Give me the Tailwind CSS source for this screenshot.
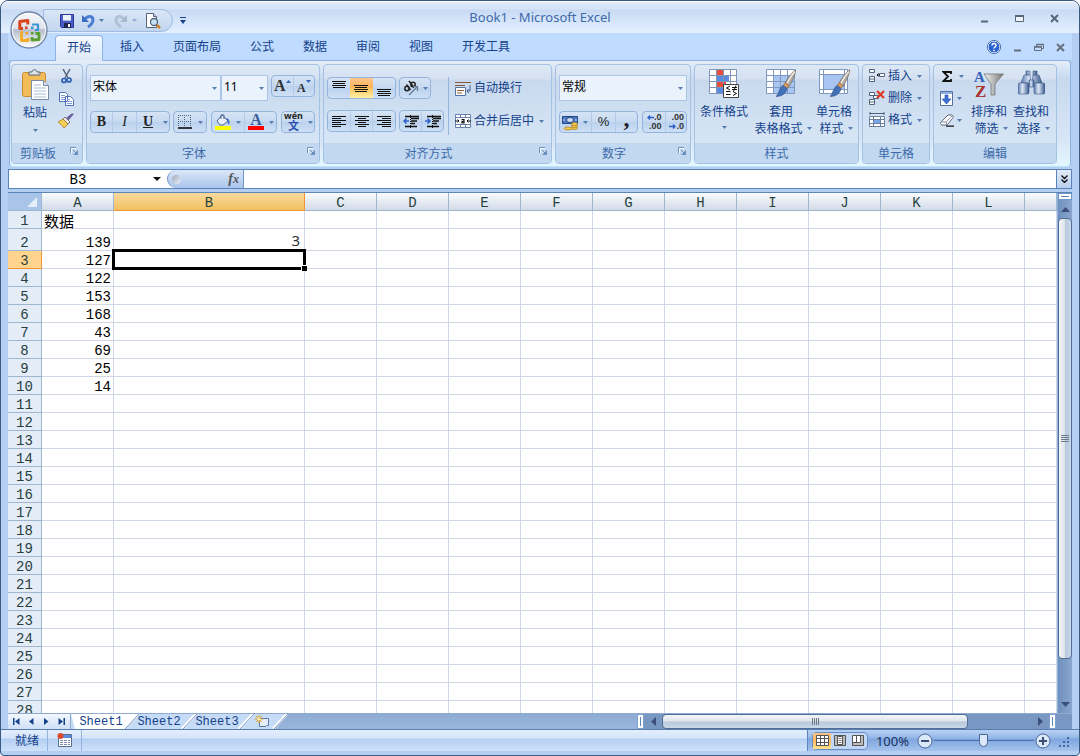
<!DOCTYPE html>
<html lang="zh-CN">
<head>
  <meta charset="UTF-8">
  <meta name="viewport" content="width=device-width, initial-scale=1.0">
  <title>Book1 - Microsoft Excel</title>
  <script src="https://cdn.jsdelivr.net/npm/@tailwindcss/browser@4"></script>
</head>
<body class="bg-white font-['Noto_Sans','Noto_Sans_CJK_SC',sans-serif] text-xs leading-4 text-[#15428b]">

  <!-- Shared shapes -->
  <svg class="hidden">
    <symbol id="caret" viewBox="0 0 5 3"><path d="M0 0h5L2.500 3z" fill="#567db1"/></symbol>
    <symbol id="launcher" viewBox="0 0 8 8"><path d="M.5 6V.5H6" fill="none" stroke="#6d8fc0"/><path d="M3 3l3 3" stroke="#6d8fc0"/><path d="M8 3v5H3z" fill="#6d8fc0"/><path d="M1.500 6V1.500H6" fill="none" stroke="#fff"/></symbol>
    <symbol id="brush" viewBox="0 0 20 28"><path d="M20 0c-4 3-9 9-11 14l4 3c3-5 6-11 7-17z" fill="#b5ada3" stroke="#6f665c" stroke-width=".7"/><path d="M19 2c-4 4-6 8-8 12" stroke="#f2eee6" stroke-width="1.300" fill="none"/><path d="M9 13l4 3-2 3-4-3z" fill="#d29a63" stroke="#8a5a30" stroke-width=".5"/><path d="M7 16l4 3c-1 5-5 8-11 8 3-2 3-9 7-11z" fill="#4472b8" stroke="#2c4f8a" stroke-width=".6"/></symbol>
  </svg>

  <div class="flex h-screen min-w-[1080px] flex-col overflow-hidden rounded-t-lg rounded-b border border-[#3b5a82] bg-[#b4cef2]">

    <!-- Title bar -->
    <header class="relative flex h-8 shrink-0 items-center border-b border-[#e3efff] bg-[linear-gradient(#ffffff_0,#dce8f8_2px,#d7e4f8_8px,#c8daf3_9px,#d5e5fa_20px,#e1effd_100%)]">
      <div class="mt-2 ml-[42px] flex h-[23px] w-[130px] items-center rounded-r-full border border-[#9dbbe3] bg-[linear-gradient(#dae6f5,#c3d6ef)] pl-4">
        <button aria-label="保存" class="mr-[7px]">
          <svg class="size-[14px]" viewBox="0 0 14 14"><path d="M.5.5h13v13h-12l-1-1z" fill="#4a5cc8" stroke="#2b379a"/><path d="M3 1h8v6H3z" fill="#eef2fb"/><path d="M3 6h8v1H3z" fill="#a9b8e0"/><path d="M4 9h7v5H4z" fill="#20244c"/><path d="M8 10h2v3H8z" fill="#fff"/></svg>
        </button>
        <button aria-label="撤消" class="mr-1">
          <svg class="size-[14px]" viewBox="0 0 14 14"><path d="M4 5c3-4 8-3 8 1 0 3-2 5-5 7" fill="none" stroke="#4a7fd4" stroke-width="3"/><path d="M1 1v7h7z" fill="#3d6cc4"/></svg>
        </button>
        <button aria-label="撤消列表" class="mr-[10px]"><svg class="h-[3px] w-[5px]"><use href="#caret"/></svg></button>
        <button aria-label="恢复" class="mr-1">
          <svg class="size-[14px]" viewBox="0 0 14 14"><path d="M10 5c-3-4-8-3-8 1 0 3 2 5 5 7" fill="none" stroke="#b3c1d4" stroke-width="3"/><path d="M13 1v7H6z" fill="#a6b6cc"/></svg>
        </button>
        <button aria-label="恢复列表" class="mr-2 opacity-50"><svg class="h-[3px] w-[5px]"><use href="#caret"/></svg></button>
        <button aria-label="打印预览">
          <svg class="size-4" viewBox="0 0 16 16"><path d="M1.500.5h7l3 3v11h-10z" fill="#fff" stroke="#56657c"/><path d="M8.500.5v3h3" fill="#cfd9e8" stroke="#56657c"/><circle cx="9" cy="9" r="3.500" fill="#c6e2f2" stroke="#50657c" stroke-width="1.300"/><path d="M12 12l3 3" stroke="#d5812c" stroke-width="2.500"/></svg>
        </button>
      </div>
      <button aria-label="自定义快速访问工具栏" class="mt-2 ml-[7px]">
        <svg class="h-[7px] w-[6px]" viewBox="0 0 6 7"><path d="M0 .5h6" stroke="#15428b"/><path d="M0 3h6L3 7z" fill="#15428b"/></svg>
      </button>
      <h1 class="absolute inset-x-0 top-2 text-center text-[13px] text-[#3e6aaa]">Book1 - Microsoft Excel</h1>
      <div class="z-10 mr-5 ml-auto flex items-center gap-[26px] pt-1">
        <button aria-label="最小化"><svg class="size-[9px]" viewBox="0 0 9 9"><path d="M1 7.500h7" stroke="#5a6778" stroke-width="2"/></svg></button>
        <button aria-label="最大化"><svg class="size-[9px]" viewBox="0 0 9 9"><path d="M.5 1.500h8v6h-8z" fill="#eef4fc" stroke="#5a6778"/><path d="M0 2h9" stroke="#5a6778" stroke-width="2"/></svg></button>
        <button aria-label="关闭"><svg class="size-[9px]" viewBox="0 0 9 9"><path d="M1 1l7 7M8 1L1 8" stroke="#5a6778" stroke-width="2"/></svg></button>
      </div>
      <!-- Office button hangs over the tab strip -->
      <button aria-label="Office 按钮" class="absolute top-[10px] left-[9px] z-20">
        <svg class="size-[38px]" viewBox="0 0 38 38">
          <defs>
            <linearGradient id="orb" x1="0" y1="0" x2="0" y2="1"><stop offset="0" stop-color="#f8f9fb"/><stop offset=".45" stop-color="#dfe3ea"/><stop offset=".5" stop-color="#b6bfce"/><stop offset="1" stop-color="#fff"/></linearGradient>
          </defs>
          <circle cx="19" cy="19" r="18" fill="url(#orb)" stroke="#7286a5" stroke-width="1.300"/>
          <circle cx="19" cy="19" r="16.600" fill="none" stroke="#fff" stroke-opacity=".8"/>
          <g fill="none" stroke-linejoin="round">
            <path d="M13 17.500H9.800v-7l8-1v4" stroke="#d8441c" stroke-width="3"/>
            <path d="M22 13.500h6v5.500H25" stroke="#3a95d9" stroke-width="2.200"/>
            <path d="M13 21.500h-1.500V29.500h6.500V27" stroke="#f5ab22" stroke-width="2.800"/>
            <path d="M25.500 22.500H29V28.500l-7 .5V26" stroke="#5a9e31" stroke-width="2.800"/>
          </g>
          <path d="M15 15.500h2.500v2.500H15z" fill="#d8441c"/><path d="M21 15.500h2.500V18H21z" fill="#3a95d9"/><path d="M15.500 21h2.500v2.500h-2.500z" fill="#f3a11c"/><path d="M21 21h2.500v2.500H21z" fill="#5a9e31"/>
        </svg>
      </button>
    </header>

    <!-- Ribbon tabs -->
    <nav class="mx-[7px] flex h-[27px] shrink-0 items-end gap-[5px] bg-[#bfdbff] pr-[7px] pl-[47px]">
      <button class="relative top-px z-10 h-[26px] rounded-t border border-b-0 border-[#8db2e3] bg-[linear-gradient(#f4f9ff,#dde9f8)] px-[11px] pb-px">开始</button>
      <button class="h-[26px] px-3">插入</button>
      <button class="h-[26px] px-3">页面布局</button>
      <button class="h-[26px] px-3">公式</button>
      <button class="h-[26px] px-3">数据</button>
      <button class="h-[26px] px-3">审阅</button>
      <button class="h-[26px] px-3">视图</button>
      <button class="h-[26px] px-3">开发工具</button>
      <div class="ml-auto flex h-[26px] items-center gap-3">
        <button aria-label="帮助"><svg class="size-[14px]" viewBox="0 0 14 14"><circle cx="7" cy="7" r="6" fill="#2a63cf" stroke="#fff"/><circle cx="7" cy="7" r="6.600" fill="none" stroke="#2d559c" stroke-width=".8"/><path d="M5 5.500c0-3 4.200-2.500 4 0C9 7 7 7 7 8.600M7 9.800v1.500" stroke="#fff" stroke-width="1.500" fill="none"/></svg></button>
        <button aria-label="最小化工作簿"><svg class="size-[9px]" viewBox="0 0 9 9"><path d="M1 7.500h7" stroke="#66707c" stroke-width="2"/></svg></button>
        <button aria-label="还原工作簿"><svg class="h-[9px] w-[10px]" viewBox="0 0 10 9"><path d="M2.500 3V1.500h7v4H8M.5 3.500h7v4h-7z" fill="none" stroke="#66707c"/><path d="M2 1.500h8M0 4h8" stroke="#66707c" stroke-width="1.500"/></svg></button>
        <button aria-label="关闭工作簿"><svg class="size-[9px]" viewBox="0 0 9 9"><path d="M1 1l7 7M8 1L1 8" stroke="#66707c" stroke-width="2"/></svg></button>
      </div>
    </nav>

    <!-- Ribbon -->
    <section class="mx-2 flex h-[107px] shrink-0 gap-[3px] rounded border border-[#8db2e3] border-b-[#b9e4f7] bg-[linear-gradient(#e4eefa,#c7d9ee_18px,#d8e6f6_80px,#e3f7ff)] px-px pt-[3px] pb-[2px]">

      <!-- Clipboard -->
      <div class="flex w-[72px] flex-col overflow-hidden rounded-sm border border-[#a5c1e3] bg-[linear-gradient(#dde8f5_0,#d5e1f1_14px,#c8d9ee_15px,#dceaf8_100%)]">
        <div class="flex flex-1 gap-2 pl-2">
          <button class="flex w-[30px] flex-col items-center pt-1">
            <svg class="h-[31px] w-[27px]" viewBox="0 0 27 31"><rect x=".5" y="3.500" width="23" height="24" rx="2" fill="#f2bd58" stroke="#c98d2d"/><path d="M7 6V3h3c0-3 5-3 5 0h3v3z" fill="#dfe5ec" stroke="#5c6570"/><path d="M9.500 11.500h12l5 5v14h-17z" fill="#fff" stroke="#7a8ba8"/><path d="M21.500 11.500v5h5" fill="#d6e0f0" stroke="#7a8ba8"/><path d="M12 16h7M12 19h12M12 22h12M12 25h12M12 28h12" stroke="#a9bcd9"/></svg>
            <span class="mt-[5px]">粘贴</span>
            <svg class="mt-2 h-[3px] w-[5px]"><use href="#caret"/></svg>
          </button>
          <div class="flex flex-col items-center gap-[7px] pt-1">
            <button aria-label="剪切"><svg class="block size-[15px]" viewBox="0 0 15 15"><path d="M4 0l5 9M11 0L6 9" stroke="#56657c" stroke-width="1.500"/><circle cx="5" cy="11.500" r="2" fill="none" stroke="#2f5fb5" stroke-width="1.700"/><circle cx="10" cy="11" r="2" fill="none" stroke="#2f5fb5" stroke-width="1.700"/></svg></button>
            <button aria-label="复制"><svg class="block size-[15px]" viewBox="0 0 15 15"><path d="M.5 1.500h6l2 2v7h-8zM6.500 5.500h5l3 3v6h-8z" fill="#fff" stroke="#4d72b8"/><path d="M2 4.500h4M2 6.500h4M2 8.500h4M8 8.500h3M8 10.500h5M8 12.500h5" stroke="#7f9fd6"/></svg></button>
            <button aria-label="格式刷"><svg class="block size-4" viewBox="0 0 16 16"><path d="M15.500 1l-5 6-2-2 5-4z" fill="#6b5fa5" stroke="#4c427e" stroke-width=".5"/><path d="M7 4l5 5-2 2-5-5z" fill="#e6e6ea" stroke="#777"/><path d="M5 6l5 5-4 4C4 12 2 11 0 9z" fill="#f3cf5a" stroke="#a87a1d" stroke-width=".8"/></svg></button>
          </div>
        </div>
        <div class="flex h-5 items-center bg-[#c1d8f0] pr-1 text-[#3e6aaa]"><span class="mr-[6px] flex-1 pt-px text-center">剪贴板</span><button aria-label="剪贴板选项" class="pb-1"><svg class="size-2"><use href="#launcher"/></svg></button></div>
      </div>

      <!-- Font -->
      <div class="flex w-[234px] flex-col overflow-hidden rounded-sm border border-[#a5c1e3] bg-[linear-gradient(#dde8f5_0,#d5e1f1_14px,#c8d9ee_15px,#dceaf8_100%)]">
        <div class="flex flex-1 flex-col gap-[10px] pt-[10px] pl-[3px]">
          <div class="flex h-[26px] items-start">
            <label class="relative block"><select aria-label="字体" class="h-[26px] w-[131px] appearance-none border border-[#abc5e8] bg-[#eaf2fb] pb-[2px] pl-[2px] text-black"><option>宋体</option></select><svg class="absolute top-3 right-1 h-[3px] w-[5px]"><use href="#caret"/></svg></label>
            <label class="relative block"><select aria-label="字号" class="h-[26px] w-[47px] appearance-none border border-[#abc5e8] bg-[#eaf2fb] pb-[2px] pl-[2px] text-xs text-black"><option>11</option></select><svg class="absolute top-3 right-1 h-[3px] w-[5px]"><use href="#caret"/></svg></label>
            <div class="ml-[3px] flex h-[22px] w-11 rounded-sm border border-[#94b3dd] bg-[linear-gradient(#d5e3f4,#c6d9f1_50%,#bad1ee_51%,#cfe0f6)]">
              <button aria-label="增大字号" class="flex flex-1 justify-center border-r border-[#b3cbe9] font-['Liberation_Serif',serif] text-base leading-5 font-bold text-[#333]">A<svg class="mt-1 h-[3px] w-[5px]" viewBox="0 0 5 3"><path d="M0 3h5L2.500 0z" fill="#2c62b8"/></svg></button>
              <button aria-label="减小字号" class="flex flex-1 justify-center font-['Liberation_Serif',serif] text-xs leading-6 font-bold text-[#333]">A<svg class="mt-1 h-[3px] w-[5px]" viewBox="0 0 5 3"><path d="M0 0h5L2.500 3z" fill="#2c62b8"/></svg></button>
            </div>
          </div>
          <div class="flex h-[22px] font-['Liberation_Serif',serif] text-sm leading-5 text-[#222]">
            <div class="mr-[3px] flex w-20 rounded-sm border border-[#94b3dd] bg-[linear-gradient(#d5e3f4,#c6d9f1_50%,#bad1ee_51%,#cfe0f6)]">
              <button class="w-[22px] border-r border-[#b3cbe9] font-bold">B</button>
              <button class="w-6 border-r border-[#b3cbe9] italic">I</button>
              <button class="w-[22px] font-bold underline">U</button>
              <button aria-label="下划线样式" class="flex items-center pl-1"><svg class="h-[3px] w-[5px]"><use href="#caret"/></svg></button>
            </div>
            <button aria-label="边框" class="mr-1 flex w-[34px] items-center gap-[6px] rounded-sm border border-[#94b3dd] bg-[linear-gradient(#d5e3f4,#c6d9f1_50%,#bad1ee_51%,#cfe0f6)] pl-1">
              <svg class="size-[14px]" viewBox="0 0 14 14"><path d="M.5 0v12M6.500 0v12M12.500 0v12M0 .5h13M0 6.500h13" stroke="#567" stroke-dasharray="1 1"/><path d="M0 13h14" stroke="#000" stroke-width="1.500"/></svg>
              <svg class="h-[3px] w-[5px]"><use href="#caret"/></svg>
            </button>
            <div class="mr-1 flex w-[66px] rounded-sm border border-[#94b3dd] bg-[linear-gradient(#d5e3f4,#c6d9f1_50%,#bad1ee_51%,#cfe0f6)]">
              <button aria-label="填充颜色" class="flex w-[33px] items-center gap-[5px] border-r border-[#b3cbe9] pl-[3px]">
                <svg class="size-4" viewBox="0 0 16 16"><path d="M7 1l6 6-5 4H5L2 7z" fill="#e9f0fa" stroke="#4d6591"/><path d="M6 5V1.500c0-1.500 3-1.500 3 0V5" fill="none" stroke="#4d6591"/><path d="M11 4c4 1 4 4 3 7-2-2-1-4-3-7z" fill="#3f6ec2"/><path d="M0 12h16v4H0z" fill="#ffff00"/></svg>
                <svg class="h-[3px] w-[5px]"><use href="#caret"/></svg>
              </button>
              <button aria-label="字体颜色" class="flex items-center gap-[5px] pl-[3px]">
                <span class="flex w-4 flex-col items-center border-b-4 border-[#ff0000] text-base leading-3 font-bold text-[#3b5c9a]">A</span>
                <svg class="h-[3px] w-[5px]"><use href="#caret"/></svg>
              </button>
            </div>
            <button class="flex w-[34px] items-center gap-[5px] rounded-sm border border-[#94b3dd] bg-[linear-gradient(#d5e3f4,#c6d9f1_50%,#bad1ee_51%,#cfe0f6)] pl-[2px]">
              <span class="flex flex-col items-center font-['Noto_Sans','Noto_Sans_CJK_SC',sans-serif] text-[9px] leading-[8px] font-bold"><span>wén</span><span class="text-[11px] leading-[12px] text-[#2c4fae]">文</span></span>
              <svg class="h-[3px] w-[5px] shrink-0"><use href="#caret"/></svg>
            </button>
          </div>
        </div>
        <div class="flex h-5 items-center bg-[#c1d8f0] pr-1 text-[#3e6aaa]"><span class="mr-[6px] flex-1 pt-px text-center">字体</span><button aria-label="字体选项" class="pb-1"><svg class="size-2"><use href="#launcher"/></svg></button></div>
      </div>

      <!-- Alignment -->
      <div class="flex w-[229px] flex-col overflow-hidden rounded-sm border border-[#a5c1e3] bg-[linear-gradient(#dde8f5_0,#d5e1f1_14px,#c8d9ee_15px,#dceaf8_100%)]">
        <div class="flex flex-1 pt-3 pl-[3px]">
          <div class="flex w-[121px] flex-col gap-[11px]">
            <div class="flex h-[22px] gap-[3px]">
              <div class="flex w-[69px] rounded-sm border border-[#94b3dd] bg-[linear-gradient(#d5e3f4,#c6d9f1_50%,#bad1ee_51%,#cfe0f6)]">
                <button aria-label="顶端对齐" class="flex flex-1 justify-center pt-[3px]"><svg class="h-[7px] w-[14px]" viewBox="0 0 14 7"><path d="M0 .5h14M1 2.500h12M0 4.500h14M1 6.500h12" stroke="#111"/></svg></button>
                <button aria-label="垂直居中" class="flex flex-1 items-center justify-center bg-[linear-gradient(#fbc58c,#fdb55a_45%,#fdc863_55%,#fff0a5)]"><svg class="h-[7px] w-[14px]" viewBox="0 0 14 7"><path d="M0 .5h14M1 2.500h12M0 4.500h14M1 6.500h12" stroke="#111"/></svg></button>
                <button aria-label="底端对齐" class="flex flex-1 items-end justify-center pb-[2px]"><svg class="h-[7px] w-[14px]" viewBox="0 0 14 7"><path d="M0 .5h14M1 2.500h12M0 4.500h14M1 6.500h12" stroke="#111"/></svg></button>
              </div>
              <button aria-label="方向" class="flex w-8 items-center gap-1 rounded-sm border border-[#94b3dd] bg-[linear-gradient(#d5e3f4,#c6d9f1_50%,#bad1ee_51%,#cfe0f6)] pl-[3px]">
                <svg class="size-4" viewBox="0 0 16 16"><g fill="none" stroke="#222" stroke-width="1.500"><circle cx="4" cy="8.500" r="2.200"/><path d="M3.500 4.500l4 5.500"/><path d="M6 1l5 6.500"/><circle cx="10" cy="4.500" r="2.200"/></g><path d="M6 15l8-8M14.500 11V6.500H10" stroke="#6a7a90" fill="none" stroke-width="1.200"/></svg>
                <svg class="h-[3px] w-[5px]"><use href="#caret"/></svg>
              </button>
            </div>
            <div class="flex h-[22px] gap-[3px]">
              <div class="flex w-[69px] rounded-sm border border-[#94b3dd] bg-[linear-gradient(#d5e3f4,#c6d9f1_50%,#bad1ee_51%,#cfe0f6)]">
                <button aria-label="左对齐" class="flex flex-1 items-center justify-center border-r border-[#b3cbe9]"><svg class="h-[11px] w-[14px]" viewBox="0 0 14 11"><path d="M0 .5h14M0 2.500h9M0 4.500h14M0 6.500h9M0 8.500h14M0 10.500h9" stroke="#111"/></svg></button>
                <button aria-label="居中" class="flex flex-1 items-center justify-center border-r border-[#b3cbe9]"><svg class="h-[11px] w-[14px]" viewBox="0 0 14 11"><path d="M0 .5h14M3 2.500h8M0 4.500h14M3 6.500h8M0 8.500h14M3 10.500h8" stroke="#111"/></svg></button>
                <button aria-label="右对齐" class="flex flex-1 items-center justify-center"><svg class="h-[11px] w-[14px]" viewBox="0 0 14 11"><path d="M0 .5h14M5 2.500h9M0 4.500h14M5 6.500h9M0 8.500h14M5 10.500h9" stroke="#111"/></svg></button>
              </div>
              <div class="flex w-[45px] rounded-sm border border-[#94b3dd] bg-[linear-gradient(#d5e3f4,#c6d9f1_50%,#bad1ee_51%,#cfe0f6)]">
                <button aria-label="减少缩进量" class="flex flex-1 items-center justify-center border-r border-[#b3cbe9]"><svg class="h-[13px] w-4" viewBox="0 0 16 13"><path d="M7.500 0v13" stroke="#111" stroke-dasharray="1 1"/><path d="M2 1.500h14M8 3.500h8M8 6h6M8 8.500h4M2 11.500h12" stroke="#111" stroke-width="1.400"/><path d="M6 6H1M3.500 3.500L1 6l2.500 2.500" stroke="#2c62c8" stroke-width="1.500" fill="none"/></svg></button>
                <button aria-label="增加缩进量" class="flex flex-1 items-center justify-center"><svg class="h-[13px] w-4" viewBox="0 0 16 13"><path d="M7.500 0v13" stroke="#111" stroke-dasharray="1 1"/><path d="M2 1.500h14M8 3.500h8M8 6h6M8 8.500h4M2 11.500h12" stroke="#111" stroke-width="1.400"/><path d="M0 6h5M2.500 3.500L5 6 2.500 8.500" stroke="#2c62c8" stroke-width="1.500" fill="none"/></svg></button>
              </div>
            </div>
          </div>
          <div class="mb-2 flex flex-col gap-[17px] border-l border-[#94b3dd] pt-[3px] pl-[6px]">
            <button class="flex items-center gap-[3px]">
              <svg class="h-[15px] w-4" viewBox="0 0 16 15"><path d="M0 1.500h16M0 4.500h10" stroke="#8c5a35"/><path d="M.5 6.500h10v8h-10z" fill="#fff" stroke="#54749f"/><path d="M2 9.500h7M2 12h5" stroke="#8c5a35"/><path d="M15 4v6h-3M13.500 8L12 10l1.500 2" stroke="#3f5f9a" fill="none"/></svg>
              自动换行
            </button>
            <button class="flex items-center gap-[3px]">
              <svg class="size-4" viewBox="0 0 16 16"><path d="M.5 1.500h15v13H.5zM.5 4.500h15M.5 11.500h15M5.500 1v3M10.500 1v3M5.500 12v3M10.500 12v3" fill="#fff" stroke="#6982a8"/><path d="M0 8h4M16 8h-4M2.500 6.500L4 8 2.500 9.500M13.500 6.500L12 8l1.500 1.500" stroke="#111" fill="none"/><path d="M6.500 6.500h2.500V10H7V8.300h2" fill="none" stroke="#111" stroke-width="1.200"/></svg>
              合并后居中
              <svg class="ml-[2px] h-[3px] w-[5px]"><use href="#caret"/></svg>
            </button>
          </div>
        </div>
        <div class="flex h-5 items-center bg-[#c1d8f0] pr-1 text-[#3e6aaa]"><span class="mr-[6px] flex-1 pt-px text-center">对齐方式</span><button aria-label="对齐选项" class="pb-1"><svg class="size-2"><use href="#launcher"/></svg></button></div>
      </div>

      <!-- Number -->
      <div class="flex w-[136px] flex-col overflow-hidden rounded-sm border border-[#a5c1e3] bg-[linear-gradient(#dde8f5_0,#d5e1f1_14px,#c8d9ee_15px,#dceaf8_100%)]">
        <div class="flex flex-1 flex-col gap-[10px] pt-[10px] pl-[3px]">
          <label class="relative block w-32"><select aria-label="数字格式" class="block h-[26px] w-full appearance-none border border-[#abc5e8] bg-[#eaf2fb] pb-[2px] pl-[2px] text-black"><option>常规</option></select><svg class="absolute top-3 right-1 h-[3px] w-[5px]"><use href="#caret"/></svg></label>
          <div class="flex h-[22px] gap-1">
            <div class="flex w-[79px] rounded-sm border border-[#94b3dd] bg-[linear-gradient(#d5e3f4,#c6d9f1_50%,#bad1ee_51%,#cfe0f6)] text-[#222]">
              <button aria-label="会计数字格式" class="flex w-8 items-center gap-1 border-r border-[#b3cbe9] pl-[2px]">
                <svg class="size-[17px]" viewBox="0 0 17 17"><path d="M.5 2.500h15v7H.5z" fill="#4d78c4" stroke="#27498a"/><ellipse cx="8" cy="6" rx="3.500" ry="2.500" fill="#cfe0f8" stroke="#27498a"/><path d="M2 5v2M14 5v2" stroke="#cfe0f8"/><g fill="#f6cf52" stroke="#a67412" stroke-width=".7"><ellipse cx="12.500" cy="14" rx="3" ry="1.500"/><ellipse cx="12.500" cy="12" rx="3" ry="1.500"/><ellipse cx="12.500" cy="10" rx="3" ry="1.500"/><ellipse cx="6" cy="14.500" rx="4" ry="1.500"/></g></svg>
                <svg class="h-[3px] w-[5px]"><use href="#caret"/></svg>
              </button>
              <button class="w-6 border-r border-[#b3cbe9] font-['Liberation_Sans',sans-serif] text-[13px]">%</button>
              <button class="flex-1 pb-3 font-['Liberation_Serif',serif] text-2xl leading-3 font-bold">,</button>
            </div>
            <div class="flex w-[45px] rounded-sm border border-[#94b3dd] bg-[linear-gradient(#d5e3f4,#c6d9f1_50%,#bad1ee_51%,#cfe0f6)] font-['Liberation_Sans',sans-serif] text-[9px] leading-[9px] font-bold text-[#333]">
              <button class="flex flex-1 flex-col items-end justify-center border-r border-[#b3cbe9] pr-[3px]"><span class="flex items-center"><svg class="h-[5px] w-[7px]" viewBox="0 0 7 5"><path d="M7 2.500H1M3 .5L1 2.500l2 2" stroke="#2c62c8" stroke-width="1.400" fill="none"/></svg>.0</span><span>.00</span></button>
              <button class="flex flex-1 flex-col items-end justify-center pr-[2px]"><span>.00</span><span class="flex items-center"><svg class="h-[5px] w-[7px]" viewBox="0 0 7 5"><path d="M0 2.500h6M4 .5l2 2-2 2" stroke="#2c62c8" stroke-width="1.400" fill="none"/></svg>.0</span></button>
            </div>
          </div>
        </div>
        <div class="flex h-5 items-center bg-[#c1d8f0] pr-1 text-[#3e6aaa]"><span class="mr-[6px] flex-1 pt-px text-center">数字</span><button aria-label="数字选项" class="pb-1"><svg class="size-2"><use href="#launcher"/></svg></button></div>
      </div>

      <!-- Styles -->
      <div class="flex w-[165px] flex-col overflow-hidden rounded-sm border border-[#a5c1e3] bg-[linear-gradient(#dde8f5_0,#d5e1f1_14px,#c8d9ee_15px,#dceaf8_100%)]">
        <div class="flex flex-1 pt-1 pl-1 leading-[17px]">
          <button class="flex w-[50px] flex-col items-center">
            <svg class="mb-1 size-[30px]" viewBox="0 0 30 30"><path d="M.5.5h27v24H.5z" fill="#fff"/><path d="M7 0h7v25H7z" fill="#e8503c"/><path d="M7 6h13v6H7z" fill="#5c8ade"/><path d="M7 12h10v6H7z" fill="#e8503c"/><path d="M7 18h7v6H7z" fill="#5c8ade"/><path d="M.5.5h27v24H.5zM7.500 0v25M14.500 0v25M21.500 0v25M0 6.500h28M0 12.500h28M0 18.500h28" fill="none" stroke="#8096b8"/><path d="M14.500 15.500h15v13h-15z" fill="#fff" stroke="#444"/><path d="M21 17l-3.500 2 3.500 2M17 22.500h4.500M17 25.500h4.500M23 18.500h5M23 20.500h5M27 16.500l-2.500 6M24 22.500l3.500 2-3.500 2" stroke="#111" fill="none"/></svg>
            条件格式
            <svg class="mt-[6px] h-[3px] w-[5px]"><use href="#caret"/></svg>
          </button>
          <button class="flex w-16 flex-col items-center">
            <svg class="mb-1 h-[30px] w-8" viewBox="0 0 32 30"><path d="M1.500.5h28v24h-28z" fill="#fff"/><path d="M8 7h21v17H8z" fill="#a9c5f2"/><path d="M1.500.5h28v24h-28zM8.500 0v25M15.500 0v25M22.500 0v25M1 6.500h29M1 12.500h29M1 18.500h29" fill="none" stroke="#7f98c0"/><use href="#brush" x="11" y="0" width="20" height="29"/></svg>
            套用
            <span class="flex items-center gap-1 pl-1">表格格式<svg class="h-[3px] w-[5px]"><use href="#caret"/></svg></span>
          </button>
          <button class="flex w-[42px] flex-col items-center">
            <svg class="mb-1 h-[30px] w-8" viewBox="0 0 32 30"><path d="M1.500.5h28v24h-28z" fill="#fff"/><path d="M6 6h20v14H6z" fill="#a9c5f2"/><path d="M1.500.5h28v24h-28zM5.500 0v25M26.500 0v25M1 5.500h29M1 20.500h29" fill="none" stroke="#7f98c0"/><use href="#brush" x="12" y="0" width="20" height="29"/></svg>
            单元格
            <span class="flex items-center gap-1 pl-1">样式<svg class="h-[3px] w-[5px]"><use href="#caret"/></svg></span>
          </button>
        </div>
        <div class="flex h-5 items-center justify-center bg-[#c1d8f0] pt-px text-[#3e6aaa]">样式</div>
      </div>

      <!-- Cells -->
      <div class="flex w-[68px] flex-col overflow-hidden rounded-sm border border-[#a5c1e3] bg-[linear-gradient(#dde8f5_0,#d5e1f1_14px,#c8d9ee_15px,#dceaf8_100%)]">
        <div class="flex flex-1 flex-col gap-[6px] pt-[3px] pl-[6px]">
          <button class="flex items-center gap-[3px]">
            <svg class="size-4" viewBox="0 0 16 16"><path d="M.5 1.500h5v3h-5zM.5 8.500h5v5h-5zM.5 11h5M10.500 5.500h5v3h-5z" fill="#fff" stroke="#51627c"/><path d="M11 7h-3M9.500 5.500L8 7l1.500 1.500" fill="none" stroke="#111"/></svg>
            插入
            <svg class="ml-[2px] h-[3px] w-[5px]"><use href="#caret"/></svg>
          </button>
          <button class="flex items-center gap-[3px]">
            <svg class="size-4" viewBox="0 0 16 16"><path d="M.5 2.500h5v3h-5zM.5 9.500h5v5h-5zM.5 12h5M4.500 5.500h5v3h-5z" fill="#fff" stroke="#51627c"/><path d="M8 1l7 7M15 1L8 8" stroke="#e23a22" stroke-width="2.200"/></svg>
            删除
            <svg class="ml-[2px] h-[3px] w-[5px]"><use href="#caret"/></svg>
          </button>
          <button class="flex items-center gap-[3px]">
            <svg class="size-4" viewBox="0 0 16 16"><path d="M1 0v3M15 0v3M1 1.500h14" stroke="#51627c"/><path d="M.5 4.500h15v10H.5z" fill="#fff"/><path d="M5 7h6v5H5z" fill="#79a3ea"/><path d="M.5 4.500h15v10H.5zM4.500 4v11M11.500 4v11M0 7.500h16M0 11.500h16" fill="none" stroke="#6b7f9f"/></svg>
            格式
            <svg class="ml-[2px] h-[3px] w-[5px]"><use href="#caret"/></svg>
          </button>
        </div>
        <div class="flex h-5 items-center justify-center bg-[#c1d8f0] pt-px text-[#3e6aaa]">单元格</div>
      </div>

      <!-- Editing -->
      <div class="flex w-[124px] flex-col overflow-hidden rounded-sm border border-[#a5c1e3] bg-[linear-gradient(#dde8f5_0,#d5e1f1_14px,#c8d9ee_15px,#dceaf8_100%)]">
        <div class="flex flex-1 pl-[6px]">
          <div class="flex w-[28px] flex-col gap-[6px] pt-[3px]">
            <button aria-label="自动求和" class="flex h-4 items-center gap-[7px] pl-[2px]"><svg class="h-[11px] w-[10px]" viewBox="0 0 10 11"><path d="M9 3V1H1.500L6 5.500 1.500 10H9V8" fill="none" stroke="#111" stroke-width="1.800"/></svg><svg class="h-[3px] w-[5px]"><use href="#caret"/></svg></button>
            <button aria-label="填充" class="flex h-4 items-center gap-1"><svg class="h-[15px] w-[13px]" viewBox="0 0 13 15"><path d="M.5.5h12v14H.5z" fill="#fff" stroke="#54709e"/><path d="M1 1h11v2H1z" fill="#8fb0e6"/><path d="M5 4h3v4h3l-4.500 5L2 8h3z" fill="#3a6fd8" stroke="#1d4aa5" stroke-width=".6"/></svg><svg class="h-[3px] w-[5px]"><use href="#caret"/></svg></button>
            <button aria-label="清除" class="flex h-4 items-center gap-[3px]"><svg class="h-[13px] w-[14px]" viewBox="0 0 14 13"><path d="M8 1h4c2 1 1 3 0 4l-5 6H2C0 10 0 9 1 8z" fill="#fff" stroke="#5a6478"/><path d="M1 8h5l6-6M6 8l1 3" stroke="#8a94a8" fill="none"/><path d="M6 12.200h8" stroke="#111" stroke-width="1.200"/></svg><svg class="h-[3px] w-[5px]"><use href="#caret"/></svg></button>
          </div>
          <button class="flex w-[42px] flex-col items-center pt-1 leading-[17px]">
            <svg class="mb-1 size-[30px] overflow-visible" viewBox="0 0 30 30"><defs><linearGradient id="funnel"><stop offset="0" stop-color="#f4f4f4"/><stop offset="1" stop-color="#777"/></linearGradient></defs><text x="0" y="13" font-family="Liberation Serif" font-size="15" font-weight="bold" fill="#3560b8">A</text><text x="1" y="28" font-family="Liberation Serif" font-size="17" font-weight="bold" fill="#a8322c">Z</text><path d="M10 5h19.500L21 15v11l-4 0V15z" fill="url(#funnel)" stroke="#777" stroke-width=".8"/></svg>
            排序和
            <span class="flex items-center gap-1 pl-1">筛选<svg class="h-[3px] w-[5px]"><use href="#caret"/></svg></span>
          </button>
          <button class="flex w-[42px] flex-col items-center pt-1 leading-[17px]">
            <svg class="mb-1 h-[30px] w-[27px]" viewBox="0 0 27 30"><defs><linearGradient id="lens"><stop offset="0" stop-color="#5878ac"/><stop offset=".4" stop-color="#dce8f8"/><stop offset="1" stop-color="#3a588c"/></linearGradient></defs><g fill="url(#lens)" stroke="#3d5788" stroke-width=".6"><path d="M8 2h4v4H8zM15 2h4v4h-4z"/><path d="M6 6h6l1 8H3zM15 6h6l3 8H14z"/><path d="M11 11h5v7h-5z"/><rect x="0" y="14" width="11" height="11" rx="1.500"/><rect x="16" y="14" width="11" height="11" rx="1.500"/></g></svg>
            查找和
            <span class="flex items-center gap-1 pl-1">选择<svg class="h-[3px] w-[5px]"><use href="#caret"/></svg></span>
          </button>
        </div>
        <div class="flex h-5 items-center justify-center bg-[#c1d8f0] pt-px text-[#3e6aaa]">编辑</div>
      </div>
    </section>

    <!-- Formula bar -->
    <div class="mx-[7px] mt-[2px] flex h-5 shrink-0 border border-[#5b85b8] bg-white">
      <input aria-label="名称框" value="B3" class="w-[138px] pt-px text-center font-['Liberation_Mono',monospace] text-sm text-black">
      <button aria-label="名称列表" class="w-5 pl-[6px]"><svg class="h-[4px] w-[8px]" viewBox="0 0 8 4"><path d="M0 0h8L4 4z" fill="#111"/></svg></button>
      <div class="flex w-[77px] items-center justify-between rounded-l-full border-r border-l border-[#6f94c8] bg-[linear-gradient(#dbe7f7,#a9c4ec)] pr-1 pl-1">
        <span class="size-[9px] rounded-full bg-[linear-gradient(135deg,#9aa7ba,#f0f4fa)]"></span>
        <button aria-label="插入函数" class="font-['Liberation_Serif',serif] text-sm leading-4 font-bold text-[#555] italic">f<span class="text-xs">x</span></button>
      </div>
      <input aria-label="编辑栏" class="min-w-0 flex-1">
      <button aria-label="展开编辑栏" class="flex w-[15px] items-center justify-center border-l border-[#5b85b8] bg-[linear-gradient(#e3edfa,#b8cfee)]"><svg class="h-[8px] w-[7px]" viewBox="0 0 7 8"><path d="M.5.5l3 3 3-3M.5 4.500l3 3 3-3" fill="none" stroke="#111" stroke-width="1.400"/></svg></button>
    </div>

    <!-- Worksheet -->
    <div class="mx-[7px] mt-[3px] flex min-h-0 flex-1 border-t border-[#5b85b8]">
      <div class="min-w-0 flex-1 overflow-hidden bg-white">
        <table class="w-full table-fixed border-separate border-spacing-0 font-['Liberation_Mono','Noto_Sans_CJK_SC',monospace] text-sm leading-[14px] text-black">
          <colgroup id="cols"></colgroup>
          <thead><tr id="letters" class="h-[18px]"></tr></thead>
          <tbody id="rows"></tbody>
        </table>
      </div>
      <!-- Vertical scroll bar -->
      <div class="flex w-[15px] flex-col border-l border-[#8fb0dc] bg-[linear-gradient(90deg,#6e90bd,#8aa6cf)]">
        <div class="h-[7px] border border-[#6f94c8] bg-white px-[2px] pt-[2px]"><div class="h-px bg-[#5b85b8]"></div></div>
        <button aria-label="向上" class="flex h-[18px] items-center justify-center"><svg class="h-[5px] w-[9px]" viewBox="0 0 9 5"><path d="M0 5h9L4.500 0z" fill="#3c4f7a"/></svg></button>
        <div class="flex min-h-0 basis-[441px] flex-col items-center justify-center gap-px rounded-sm border border-[#536e96] bg-[linear-gradient(90deg,#f3f6f8,#dfe5ea_45%,#b8c9dc_55%,#c9d9ea)]">
          <i class="h-px w-2 bg-[#6d7a8c]"></i><i class="h-px w-2 bg-[#6d7a8c]"></i><i class="h-px w-2 bg-[#6d7a8c]"></i><i class="h-px w-2 bg-[#6d7a8c]"></i>
        </div>
        <button aria-label="向下" class="mt-auto flex h-[18px] items-center justify-center"><svg class="h-[5px] w-[9px]" viewBox="0 0 9 5"><path d="M0 0h9L4.500 5z" fill="#3c4f7a"/></svg></button>
      </div>
    </div>

    <!-- Sheet tabs and horizontal scroll bar -->
    <div class="mx-[7px] flex h-4 shrink-0 border-t border-[#8fa9cf] bg-[linear-gradient(#8eabd4,#9ab6dd)] font-['Liberation_Mono',monospace]">
      <div class="flex w-[63px] items-center justify-around border-r border-[#8fa9cf] bg-[linear-gradient(#f2f7fe,#cfe0f8)]">
        <button aria-label="第一张"><svg class="block h-[7px] w-[7px]" viewBox="0 0 7 7"><path d="M0 0h1.500v7H0zM6.500 0v7L2 3.500z" fill="#15428b"/></svg></button>
        <button aria-label="上一张"><svg class="block h-[7px] w-[5px]" viewBox="0 0 5 7"><path d="M4.500 0v7L0 3.500z" fill="#15428b"/></svg></button>
        <button aria-label="下一张"><svg class="block h-[7px] w-[5px]" viewBox="0 0 5 7"><path d="M0 0v7l4.500-3.500z" fill="#15428b"/></svg></button>
        <button aria-label="最后一张"><svg class="block h-[7px] w-[7px]" viewBox="0 0 7 7"><path d="M5.500 0H7v7H5.500zM.5 0v7L5 3.500z" fill="#15428b"/></svg></button>
      </div>
      <div class="relative h-[15px] w-[218px]">
        <svg class="absolute inset-0" width="218" height="15" viewBox="0 0 218 15">
          <path d="M0 0h216l-15 15H0z" fill="#c6dbf6"/>
          <path d="M0 0h67L53 15H4z" fill="#fff"/>
          <path d="M67 0L53 15M125 0l-14 15M182 0l-14 15M216 0l-14 15" stroke="#fff" stroke-width="3"/>
          <path d="M68 0L54 15M126 0l-14 15M183 0l-14 15M217 0l-14 15" stroke="#7794c2"/>
        </svg>
        <div class="relative flex pt-px leading-[14px]">
          <button class="w-[58px] pl-[2px]">Sheet1</button>
          <button class="w-[58px] pl-[2px]">Sheet2</button>
          <button class="w-[58px] pl-[2px]">Sheet3</button>
          <button aria-label="插入工作表" class="pl-[10px]"><svg class="block size-[14px]" viewBox="0 0 14 14"><path d="M4.500 3.500h9v7h-2l-1 1h-6z" fill="#e6eefc" stroke="#5a78a8"/><path d="M4 0v8M0 4h8M1 1l6 6M7 1L1 7" stroke="#e39b1e"/><circle cx="4" cy="4" r="1.500" fill="#fff3b0"/></svg></button>
        </div>
      </div>
      <div class="flex-1"></div>
      <div class="flex w-[435px] bg-[#7897c3]">
        <div class="flex w-[7px] justify-center border border-[#7f9fcf] bg-white py-[2px]"><i class="w-px bg-[#5b85b8]"></i></div>
        <button aria-label="向左" class="flex w-[18px] items-center justify-center"><svg class="h-[9px] w-[5px]" viewBox="0 0 5 9"><path d="M5 0v9L0 4.500z" fill="#3c4f7a"/></svg></button>
        <div class="flex w-[306px] items-center justify-center gap-px rounded-sm border border-[#536e96] bg-[linear-gradient(#f3f6f8,#dfe5ea_45%,#b8c9dc_55%,#c9d9ea)]">
          <i class="h-[7px] w-px bg-[#6d7a8c]"></i><i class="h-[7px] w-px bg-[#6d7a8c]"></i><i class="h-[7px] w-px bg-[#6d7a8c]"></i><i class="h-[7px] w-px bg-[#6d7a8c]"></i>
        </div>
        <button aria-label="向右" class="ml-auto flex w-[18px] items-center justify-center"><svg class="h-[9px] w-[5px]" viewBox="0 0 5 9"><path d="M0 0v9l5-4.500z" fill="#3c4f7a"/></svg></button>
        <div class="mr-4 flex w-[7px] justify-center border border-[#7f9fcf] bg-white py-[2px]"><i class="w-px bg-[#5b85b8]"></i></div>
      </div>
    </div>

    <!-- Status bar -->
    <footer class="flex h-[22px] shrink-0 items-center border-t border-[#567db0] bg-[linear-gradient(#e4effd_0,#d4e4fa_8px,#b4cff3_9px,#cfe1fa_100%)]">
      <span class="flex h-full items-center border-r border-[#94b3dd] pr-2 pl-[14px]">就绪</span>
      <button aria-label="录制宏" class="flex h-full items-center border-r border-[#94b3dd] px-[9px]"><svg class="size-[15px]" viewBox="0 0 15 15"><path d="M1.500 1.500h13v12h-13z" fill="#fff" stroke="#5a6f94"/><path d="M2 2h12v3H2z" fill="#5b8be0"/><path d="M3 7.500h10M3 9.500h10M3 11.500h10" stroke="#7d8fae" stroke-dasharray="3 1"/><circle cx="3.500" cy="3" r="3" fill="#dc4b30"/></svg></button>
      <div class="ml-auto flex h-full w-[272px] items-center border-l border-[#5d86bf] bg-[linear-gradient(#b9d2f5_0,#94b6e6_8px,#7ea6de_9px,#a5c4ee_100%)] pl-1">
        <div class="flex h-[18px] w-14 rounded-sm border border-[#6a8fc6] bg-[#c3d8f4]">
          <button aria-label="普通" class="flex flex-1 items-center justify-center bg-[linear-gradient(#f9c58a,#fcb85d_50%,#ffe48f)]"><svg class="h-[11px] w-[13px]" viewBox="0 0 13 11"><path d="M.5.5h12v10H.5zM4.500 0v11M8.500 0v11M0 3.500h13M0 7.500h13" fill="#fff" stroke="#555"/></svg></button>
          <button aria-label="页面布局视图" class="flex flex-1 items-center justify-center"><svg class="h-[11px] w-[12px]" viewBox="0 0 12 11"><path d="M.5.500h11v10H.5z" fill="#bbb" stroke="#555"/><path d="M3.500 1.500h5v8h-5z" fill="#fff" stroke="#555"/><path d="M4.500 3.500h3M4.500 5.500h3M4.500 7.500h3" stroke="#777"/></svg></button>
          <button aria-label="分页预览" class="flex flex-1 items-center justify-center"><svg class="h-[11px] w-[12px]" viewBox="0 0 12 11"><path d="M.5.5h11v10H.5z" fill="#bbb" stroke="#555"/><path d="M1 1h3v6H1zM5 1h3v6H5z" fill="#fff"/><path d="M4.500 0v7M8.500 0v7.500H0" fill="none" stroke="#555"/></svg></button>
        </div>
        <button class="w-[49px] text-center text-[13px] text-[#15305f]">100%</button>
        <button aria-label="缩小"><svg class="block size-4" viewBox="0 0 16 16"><circle cx="8" cy="8" r="7" fill="#dbe8fa" stroke="#4a6694"/><path d="M4 8h8" stroke="#3b4f74" stroke-width="2"/></svg></button>
        <input type="range" aria-label="显示比例" min="0" max="100" value="49" class="mx-px h-4 w-[100px] appearance-none bg-[linear-gradient(#4a6fa8,#4a6fa8)] bg-[length:100%_1px] bg-center bg-no-repeat [&::-webkit-slider-thumb]:h-[13px] [&::-webkit-slider-thumb]:w-[9px] [&::-webkit-slider-thumb]:appearance-none [&::-webkit-slider-thumb]:rounded-b-full [&::-webkit-slider-thumb]:border [&::-webkit-slider-thumb]:border-[#4a6694] [&::-webkit-slider-thumb]:bg-[#dbe8fa]">
        <button aria-label="放大"><svg class="block size-4" viewBox="0 0 16 16"><circle cx="8" cy="8" r="7" fill="#dbe8fa" stroke="#4a6694"/><path d="M4 8h8M8 4v8" stroke="#3b4f74" stroke-width="2"/></svg></button>
        <svg class="mt-1 ml-2 size-[11px]" viewBox="0 0 11 11"><path d="M8 0h2v2H8zM4 4h2v2H4zM8 4h2v2H8zM0 8h2v2H0zM4 8h2v2H4zM8 8h2v2H8z" fill="#41679f"/></svg>
      </div>
    </footer>
    <div class="h-1 shrink-0"></div>
  </div>

  <script>
    const data = ['数据', 139, 127, 122, 153, 168, 43, 69, 25, 14];
    const letters = ['A', 'B', 'C', 'D', 'E', 'F', 'G', 'H', 'I', 'J', 'K', 'L', ''];

    // Column widths: row header, A, B (wide), C..L, remainder
    let cols = '<col class="w-[34px]">';
    letters.forEach(l => {
      cols += l === 'B' ? '<col class="w-[191px]">' : l ? '<col class="w-[72px]">' : '<col>';
    });
    document.getElementById('cols').innerHTML = cols;

    let head = '<th class="border-r border-b border-[#9eb6ce] bg-[#a9c4e9] p-0"><svg class="mt-px ml-auto mr-1 block h-[10px] w-[10px]" viewBox="0 0 10 10"><path d="M10 0v10H0z" fill="#e6eefa"/></svg></th>';
    letters.forEach(l => {
      head += l === 'B'
        ? '<th class="border-r border-b border-[#f29536] bg-[linear-gradient(#f9d99f,#f1c15f)] p-0 align-bottom font-normal text-[#27413e]">B</th>'
        : `<th class="border-r border-b border-[#9eb6ce] bg-[linear-gradient(#f9fcfd,#d3dbe9)] p-0 align-bottom font-normal text-[#27413e]">${l}</th>`;
    });
    document.getElementById('letters').innerHTML = head;

    let body = '';
    for (let r = 1; r <= 28; r++) {
      body += r === 2 ? '<tr class="h-[22px]">' : '<tr class="h-[18px]">';
      body += r === 3
        ? '<th class="border-r border-b border-[#f29536] bg-[#ffd58d] p-0 align-bottom font-normal text-[#27413e]">3</th>'
        : `<th class="border-r border-b border-[#9eb6ce] bg-[#e4ecf7] p-0 align-bottom font-normal text-[#27413e]">${r}</th>`;
      letters.forEach(l => {
        if (l === 'A' && r === 1) {
          body += `<td class="border-r border-b border-[#d0d7e5] p-0 pl-[2px] align-bottom font-['Noto_Sans_CJK_SC',sans-serif] text-[15px]">${data[0]}</td>`;
        } else if (l === 'A') {
          body += `<td class="border-r border-b border-[#d0d7e5] p-0 pr-[2px] text-right align-bottom">${data[r - 1] ?? ''}</td>`;
        } else if (l === 'B' && r === 2) {
          body += `<td class="border-r border-b border-[#d0d7e5] p-0 pr-1 text-right font-['Noto_Sans',sans-serif] text-[15px] text-[#333]">3</td>`;
        } else if (l === 'B' && r === 3) {
          // Active cell frame with its fill handle
          body += '<td class="relative border-r border-b border-[#d0d7e5] p-0"><div class="absolute -inset-[2px] border-3 border-black"></div><div class="absolute -right-[3px] -bottom-[3px] size-[6px] border-t border-l border-white bg-black"></div></td>';
        } else {
          body += '<td class="border-r border-b border-[#d0d7e5] p-0"></td>';
        }
      });
      body += '</tr>';
    }
    document.getElementById('rows').innerHTML = body;
  </script>
</body>
</html>
